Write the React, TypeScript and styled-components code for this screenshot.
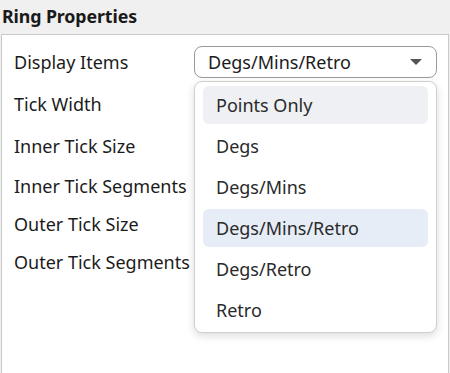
import React from "react";
import styled, { createGlobalStyle } from "styled-components";

const Global = createGlobalStyle`
  html, body { margin: 0; padding: 0; }
  body {
    width: 450px;
    height: 373px;
    overflow: hidden;
    background: #f0f0f0;
    font-family: "Noto Sans", "Open Sans", sans-serif;
  }
`;

const Page = styled.div`
  display: flex;
  flex-direction: column;
  height: 373px;
`;

const Header = styled.div`
  height: 34px;
  box-sizing: border-box;
  padding: 3px 0 0 2px;
  font-size: 17.8px;
  line-height: 26px;
  font-weight: 700;
  color: #1a1a1a;
  letter-spacing: -0.1px;
`;

const Panel = styled.div`
  flex: 1;
  margin: 0 1px;
  background: #fff;
  border: 1px solid #c9c9c9;
  border-bottom: none;
  padding: 11px 0 0 12px;
`;

const Grid = styled.div`
  display: grid;
  grid-template-columns: 180px 243px;
  grid-template-rows: 32px 32px 32px 28px 28px 28px;
  row-gap: 10px;
  align-items: center;
`;

const Label = styled.div`
  font-size: 18px;
  color: #1b1b1b;
  white-space: nowrap;
`;

const SelectWrap = styled.div`
  position: relative;
  height: 32px;
  z-index: 2;
`;

const SelectBox = styled.div`
  box-sizing: border-box;
  height: 32px;
  border: 1px solid #9a9a9a;
  border-radius: 8px;
  display: flex;
  align-items: center;
  justify-content: space-between;
  padding: 0 14px 0 13px;
  font-size: 18px;
  color: #1b1b1b;
  background: #fff;
`;

const Arrow = styled.span`
  width: 0;
  height: 0;
  border-left: 6px solid transparent;
  border-right: 6px solid transparent;
  border-top: 6px solid #555;
`;

const Input = styled.div`
  box-sizing: border-box;
  height: 100%;
  border: 1px solid #b5b5b5;
  border-radius: 4px;
  background: #fff;
`;

const Menu = styled.div`
  position: absolute;
  top: 35px;
  left: 0;
  width: 243px;
  box-sizing: border-box;
  background: #fff;
  border: 1px solid #cfcfcf;
  border-radius: 8px;
  box-shadow: 0 3px 8px rgba(0, 0, 0, 0.14);
  padding: 4px 8px 3px;
  display: flex;
  flex-direction: column;
  gap: 3px;
`;

const Item = styled.div<{ $bg?: string }>`
  height: 38px;
  border-radius: 6px;
  display: flex;
  align-items: center;
  padding-left: 13px;
  font-size: 18px;
  color: #2a2a2a;
  background: ${(p) => p.$bg ?? "transparent"};
`;

const options: { label: string; bg?: string }[] = [
  { label: "Points Only", bg: "#eef0f3" },
  { label: "Degs" },
  { label: "Degs/Mins" },
  { label: "Degs/Mins/Retro", bg: "#e6edf7" },
  { label: "Degs/Retro" },
  { label: "Retro" },
];

const rows = [
  "Tick Width",
  "Inner Tick Size",
  "Inner Tick Segments",
  "Outer Tick Size",
  "Outer Tick Segments",
];

export default function App() {
  return (
    <Page>
      <Global />
      <Header>Ring Properties</Header>
      <Panel>
        <Grid>
          <Label>Display Items</Label>
          <SelectWrap>
            <SelectBox>
              <span>Degs/Mins/Retro</span>
              <Arrow />
            </SelectBox>
            <Menu>
              {options.map((o) => (
                <Item key={o.label} $bg={o.bg}>
                  {o.label}
                </Item>
              ))}
            </Menu>
          </SelectWrap>
          {rows.map((r) => (
            <React.Fragment key={r}>
              <Label>{r}</Label>
              <Input />
            </React.Fragment>
          ))}
        </Grid>
      </Panel>
    </Page>
  );
}
